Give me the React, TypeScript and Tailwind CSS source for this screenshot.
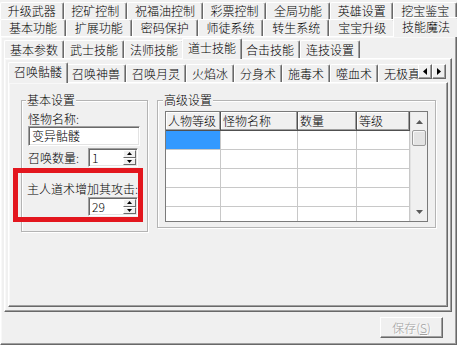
import React from "react";

type TabProps = { label: string; selected?: boolean; grow?: boolean; top?: boolean };

function Tab({ label, selected, grow, top }: TabProps) {
  const base =
    "flex shrink-0 items-center justify-center whitespace-nowrap rounded-t-[2px] border-l border-r border-t border-l-white border-t-white border-r-[#696969] bg-[#f0f0f0] px-[5px] shadow-[inset_-1px_0_#a0a0a0]";
  const g = grow ? "flex-auto" : "";
  if (selected) {
    const sel = top
      ? "relative z-10 -mx-[2px] -mb-[1px] h-[20px] pb-[2px]"
      : "relative z-10 -mx-[2px] -mb-[1px] h-[21px] pb-[3px]";
    return <div className={`${base} ${sel} ${g}`}>{label}</div>;
  }
  return <div className={`${base} self-stretch ${g}`}>{label}</div>;
}

const raisedPanel =
  "border border-b-[#696969] border-l-white border-r-[#696969] border-t-white shadow-[inset_-1px_-1px_#a0a0a0,inset_1px_1px_#f8f8f8]";

const sunken =
  "border border-b-white border-l-[#a0a0a0] border-r-white border-t-[#a0a0a0] shadow-[inset_1px_1px_#696969,inset_-1px_-1px_#e3e3e3]";

function SpinBtn({ up }: { up?: boolean }) {
  return (
    <div className="flex flex-1 items-center justify-center border border-b-[#696969] border-l-white border-r-[#696969] border-t-white bg-[#f0f0f0]">
      <svg width="5" height="3" viewBox="0 0 5 3">
        {up ? <path d="M0 3L2.5 0L5 3Z" fill="#000" /> : <path d="M0 0L2.5 3L5 0Z" fill="#000" />}
      </svg>
    </div>
  );
}

function Spin({ value }: { value: string }) {
  return (
    <div className={`flex h-[19px] w-[50px] shrink-0 bg-white ${sunken}`}>
      <div className="flex flex-1 items-center pl-[3px]">{value}</div>
      <div className="flex w-[14px] flex-col py-[1px] pr-[1px]">
        <SpinBtn up />
        <SpinBtn />
      </div>
    </div>
  );
}

const row1 = ["升级武器", "挖矿控制", "祝福油控制", "彩票控制", "全局功能", "英雄设置", "挖宝鉴宝"];
const row2 = ["基本功能", "扩展功能", "密码保护", "师徒系统", "转生系统", "宝宝升级", "技能魔法"];
const lvl2 = ["基本参数", "武士技能", "法师技能", "道士技能", "合击技能", "连技设置"];
const lvl3 = ["召唤骷髅", "召唤神兽", "召唤月灵", "火焰冰", "分身术", "施毒术", "噬血术", "无极真气"];

const headers = ["人物等级", "怪物名称", "数量", "等级"];
const colW = ["w-[55px]", "w-[77px]", "w-[59px]", "w-[53px]"];

const groupBox =
  "flex shrink-0 flex-col border border-[#b4b4b4] shadow-[inset_1px_1px_#fff,1px_1px_#fff]";

export default function App() {
  return (
    <div className="relative flex h-[345px] w-[457px] flex-col overflow-hidden bg-[#f0f0f0] text-[12px] font-light leading-[14px] text-black [font-family:'Noto_Sans_CJK_SC',sans-serif]">
      {/* top-level tab rows */}
      <div className="flex flex-col pt-[2px]">
        <div className="flex h-[17px] items-end">
          {row1.map((t) => (
            <Tab key={t} label={t} grow top />
          ))}
        </div>
        <div className="flex h-[17px] items-end">
          {row2.map((t) => (
            <Tab key={t} label={t} grow top selected={t === "技能魔法"} />
          ))}
        </div>
      </div>

      {/* outer panel */}
      <div className={`flex flex-1 flex-col pl-[3px] pr-[4px] pt-[3px] ${raisedPanel}`}>
        {/* level 2 */}
        <div className="flex h-[272px] shrink-0 flex-col">
          <div className="flex h-[18px] shrink-0 items-end">
            {lvl2.map((t) => (
              <Tab key={t} label={t} selected={t === "道士技能"} />
            ))}
          </div>
          <div className={`flex flex-1 flex-col px-[3px] pb-[4px] pt-[5px] ${raisedPanel}`}>
            {/* level 3 */}
            <div className="flex flex-1 flex-col">
              <div className="flex h-[18px] shrink-0 items-end">
                <div className="flex h-full min-w-0 flex-1 items-end overflow-x-clip pl-[2px]">
                  {lvl3.map((t) => (
                    <Tab key={t} label={t} selected={t === "召唤骷髅"} />
                  ))}
                </div>
                <div className="mr-[2px] flex self-start">
                  <div className="flex h-[15px] w-[14px] items-center justify-center border border-b-[#696969] border-l-white border-r-[#696969] border-t-white bg-[#f0f0f0] shadow-[inset_-1px_-1px_#a0a0a0]">
                    <svg width="4" height="7" viewBox="0 0 4 7">
                      <path d="M4 0V7L0 3.5Z" fill="#000" />
                    </svg>
                  </div>
                  <div className="flex h-[15px] w-[14px] items-center justify-center border border-b-[#696969] border-l-white border-r-[#696969] border-t-white bg-[#f0f0f0] shadow-[inset_-1px_-1px_#a0a0a0]">
                    <svg width="4" height="7" viewBox="0 0 4 7">
                      <path d="M0 0V7L4 3.5Z" fill="#000" />
                    </svg>
                  </div>
                </div>
              </div>
              <div className={`flex flex-1 items-start gap-[9px] pl-[12px] pr-[11px] pt-[17px] ${raisedPanel}`}>
                {/* 基本设置 */}
                <div className={`h-[132px] w-[127px] pl-[6px] ${groupBox}`}>
                  <div className="-ml-[2px] -mt-[8px] w-fit bg-[#f0f0f0] px-[1px]">基本设置</div>
                  <div className="mt-[5px] whitespace-nowrap">怪物名称:</div>
                  <div className={`flex h-[20px] w-[112px] items-center bg-white pl-[3px] ${sunken}`}>变异骷髅</div>
                  <div className="mt-[2px] flex h-[19px] items-center">
                    <div className="w-[60px] whitespace-nowrap">召唤数量:</div>
                    <Spin value="1" />
                  </div>
                  <div className="-ml-[1px] mt-[15px] whitespace-nowrap leading-[14px]">主人道术增加其攻击:</div>
                  <div className="ml-[60px] mt-[1px]">
                    <Spin value="29" />
                  </div>
                </div>

                {/* 高级设置 */}
                <div className={`h-[128px] w-[279px] pl-[7px] ${groupBox}`}>
                  <div className="-ml-[2px] -mt-[8px] w-fit bg-[#f0f0f0] px-[1px]">高级设置</div>
                  <div className="mt-[4px] flex h-[111px] w-[263px] border border-[#7a7a7a] bg-white">
                    <div className="flex w-[244px] flex-col overflow-hidden">
                      <div className="flex h-[19px] shrink-0">
                        {headers.map((h, i) => (
                          <div
                            key={h}
                            className={`${colW[i]} flex shrink-0 items-center whitespace-nowrap border-b border-r border-b-[#505050] border-r-[#505050] bg-[#f0f0f0] pl-[2px] shadow-[inset_-1px_-1px_#a0a0a0,inset_1px_1px_#fff]`}
                          >
                            {h}
                          </div>
                        ))}
                      </div>
                      {[0, 1, 2, 3, 4].map((r) => (
                        <div key={r} className="flex h-[19px] shrink-0">
                          {colW.map((w, i) => (
                            <div
                              key={i}
                              className={`${w} shrink-0 border-b border-r border-[#c8c8c8] ${r === 0 && i === 0 ? "bg-[#3399ff]" : "bg-white"}`}
                            />
                          ))}
                        </div>
                      ))}
                    </div>
                    <div className="flex w-[17px] shrink-0 flex-col border-l border-[#e2e2e2] bg-[#f0f0f0]">
                      <div className="flex h-[17px] shrink-0 items-center justify-center pt-[3px]">
                        <svg width="7" height="4" viewBox="0 0 7 4">
                          <path d="M0 4L3.5 0L7 4Z" fill="#5a5a5a" />
                        </svg>
                      </div>
                      <div className="mx-[1px] mt-[1px] h-[16px] shrink-0 rounded-[2px] border border-[#9a9a9a] bg-[#e3e3e3] shadow-[inset_1px_1px_#f7f7f7]" />
                      <div className="flex-1" />
                      <div className="flex h-[17px] shrink-0 items-center justify-center pb-[1px]">
                        <svg width="7" height="4" viewBox="0 0 7 4">
                          <path d="M0 0L3.5 4L7 0Z" fill="#5a5a5a" />
                        </svg>
                      </div>
                    </div>
                  </div>
                </div>
              </div>
            </div>
          </div>
        </div>

        {/* save button row */}
        <div className="mt-[5px] flex justify-end pr-[9px]">
          <div className="flex h-[21px] w-[63px] items-center justify-center border border-b-[#696969] border-l-white border-r-[#696969] border-t-white bg-[#f0f0f0] text-[#a0a0a0] shadow-[inset_-1px_-1px_#a0a0a0] [text-shadow:1px_1px_#fff]">
            保存(<span className="underline">S</span>)
          </div>
        </div>
      </div>

      {/* red annotation box */}
      <div className="pointer-events-none absolute left-[13px] top-[168px] h-[54px] w-[130px] border-[5px] border-[#e3161e]" />
    </div>
  );
}
